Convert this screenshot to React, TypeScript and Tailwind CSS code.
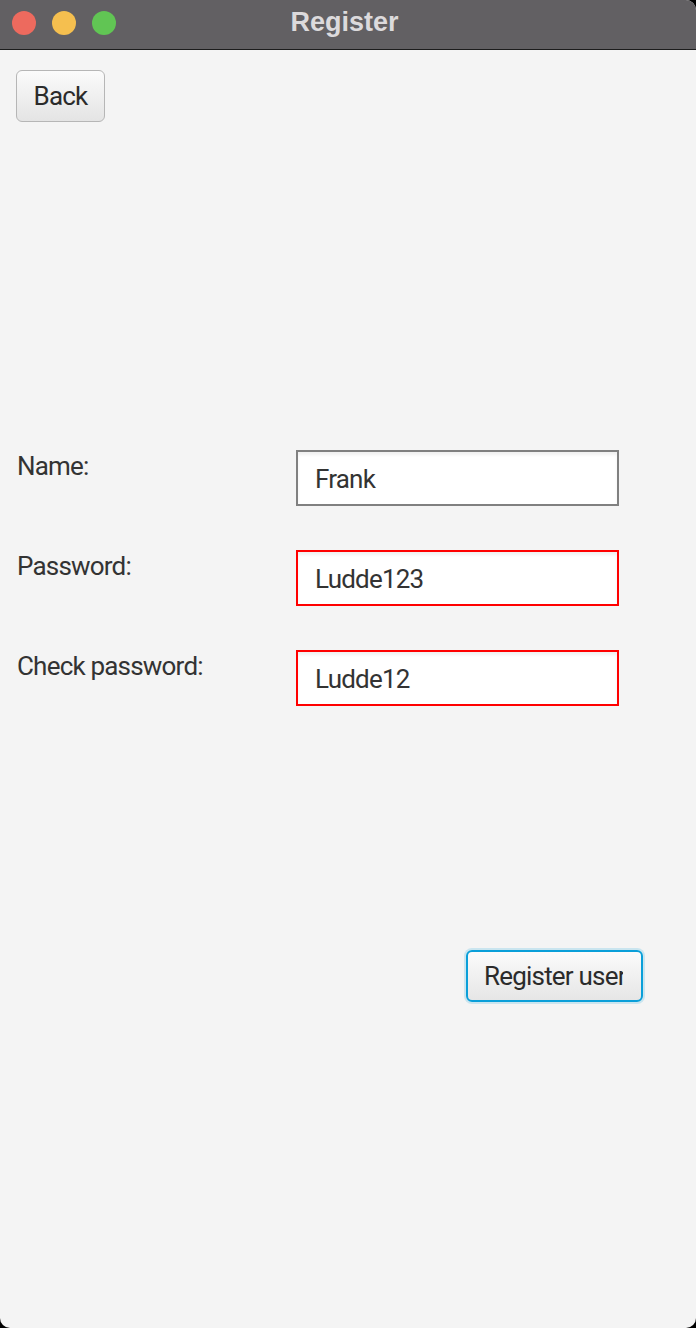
import React from "react";

const font = { fontFamily: "Roboto, 'Liberation Sans', sans-serif" };

export default function App() {
  return (
    <div className="h-[1328px] w-[696px] bg-black" style={font}>
      <div className="flex h-full flex-col overflow-hidden rounded-tr-[10px] rounded-b-[10px] bg-[#f4f4f4]">
        <TitleBar title="Register" />
        <main className="flex flex-1 flex-col">
          <div className="pl-[16px] pt-[20px]">
            <button className="flex h-[52px] w-[89px] items-center justify-center rounded-[6px] border-[1.5px] border-[#b6b6b6] bg-gradient-to-b from-[#fbfbfb] to-[#e4e4e4] text-[26px] tracking-[-0.8px] text-[#2b2b2b]">
              Back
            </button>
          </div>

          <div className="mt-[328px] flex flex-col gap-[44px]">
            <FormRow label="Name:" value="Frank" />
            <FormRow label="Password:" value="Ludde123" invalid />
            <FormRow label="Check password:" value="Ludde12" invalid />
          </div>

          <div className="mt-[244px] flex justify-end pr-[53px]">
            <button className="flex h-[52px] w-[177px] items-center rounded-[6px] border-2 border-[#0a9fd9] bg-gradient-to-b from-[#fbfbfb] to-[#e6e6e6] pl-[16px] text-[26px] tracking-[-0.8px] text-[#2b2b2b] shadow-[0_0_0_2px_rgba(10,159,217,0.18)]">
              <span className="block w-[139px] overflow-hidden whitespace-nowrap text-left">
                Register user
              </span>
            </button>
          </div>
        </main>
      </div>
    </div>
  );
}

function TitleBar({ title }: { title: string }) {
  return (
    <header className="grid h-[50px] grid-cols-[1fr_auto_1fr] items-center border-b border-[#1c1c1c] bg-[#626063]">
      <div className="flex gap-[16px] pl-[12px] pb-[4px]">
        <span className="h-[24px] w-[24px] rounded-full bg-[#ed6a5e]" />
        <span className="h-[24px] w-[24px] rounded-full bg-[#f5bf4f]" />
        <span className="h-[24px] w-[24px] rounded-full bg-[#61c554]" />
      </div>
      <h1
        className="pb-[5px] pr-[7px] text-[27px] font-bold leading-none text-[#dcdadc]"
        style={{ fontFamily: "'Liberation Sans', Arial, sans-serif" }}
      >
        {title}
      </h1>
      <div />
    </header>
  );
}

function FormRow({ label, value, invalid }: { label: string; value: string; invalid?: boolean }) {
  return (
    <div className="flex items-start">
      <label className="w-[296px] pl-[17px] text-[26px] leading-[32px] tracking-[-0.8px] text-[#333333]">
        {label}
      </label>
      <div
        className={
          "flex h-[56px] w-[323px] items-center border-2 bg-white pl-[17px] pt-[2px] text-[26px] leading-[32px] tracking-[-0.8px] text-[#333333] shadow-[inset_0_3px_3px_rgba(0,0,0,0.06)] " +
          (invalid ? "border-[#ff0000]" : "border-[#808080]")
        }
      >
        {value}
      </div>
    </div>
  );
}
